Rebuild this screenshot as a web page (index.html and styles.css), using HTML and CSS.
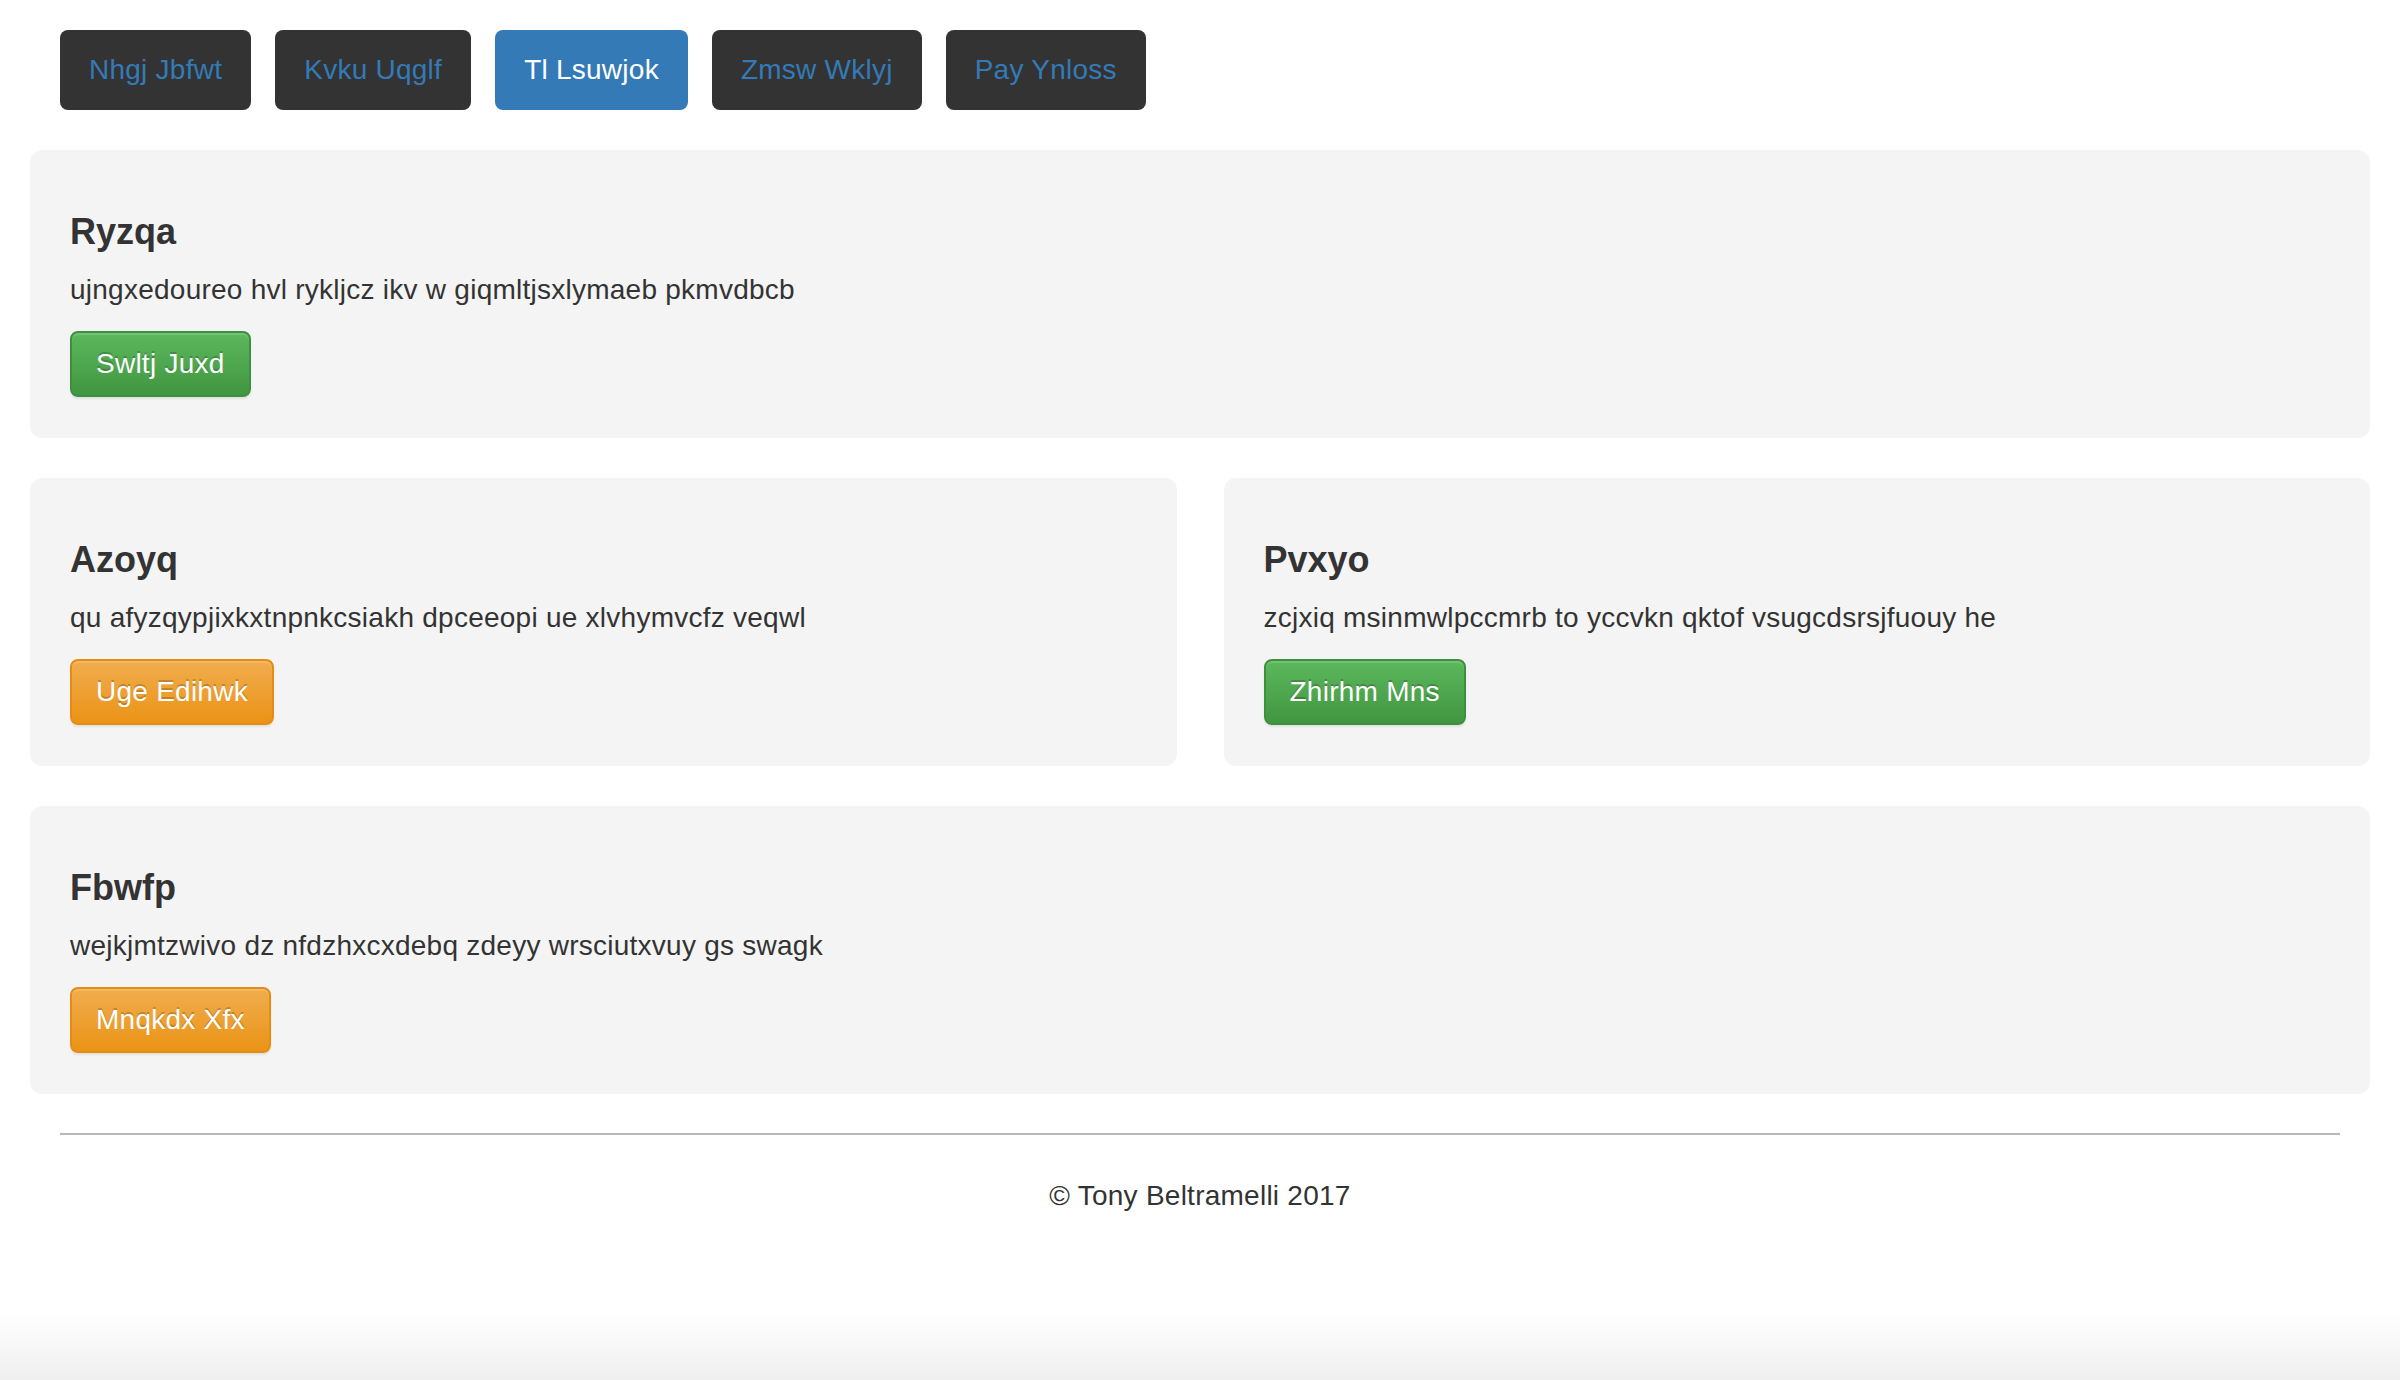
FILE: index.html
```html
<!DOCTYPE html>
<html>
<head>
<meta charset="utf-8">
<title>Page</title>
<link rel="stylesheet" href="styles.css">
</head>
<body>
<div class="page">
  <nav class="nav">
    <a class="nav-btn">Nhgj Jbfwt</a>
    <a class="nav-btn">Kvku Uqglf</a>
    <a class="nav-btn active">Tl Lsuwjok</a>
    <a class="nav-btn">Zmsw Wklyj</a>
    <a class="nav-btn">Pay Ynloss</a>
  </nav>
  <main class="content">
    <section class="card">
      <h4 class="card-title">Ryzqa</h4>
      <p class="card-text">ujngxedoureo hvl rykljcz ikv w giqmltjsxlymaeb pkmvdbcb</p>
      <a class="btn btn-success">Swltj Juxd</a>
    </section>
    <div class="row-2">
      <section class="card">
        <h4 class="card-title">Azoyq</h4>
        <p class="card-text">qu afyzqypjixkxtnpnkcsiakh dpceeopi ue xlvhymvcfz veqwl</p>
        <a class="btn btn-warning">Uge Edihwk</a>
      </section>
      <section class="card">
        <h4 class="card-title">Pvxyo</h4>
        <p class="card-text">zcjxiq msinmwlpccmrb to yccvkn qktof vsugcdsrsjfuouy he</p>
        <a class="btn btn-success">Zhirhm Mns</a>
      </section>
    </div>
    <section class="card">
      <h4 class="card-title">Fbwfp</h4>
      <p class="card-text">wejkjmtzwivo dz nfdzhxcxdebq zdeyy wrsciutxvuy gs swagk</p>
      <a class="btn btn-warning">Mnqkdx Xfx</a>
    </section>
  </main>
  <footer class="footer">
    <hr class="rule">
    <p class="copyright">© Tony Beltramelli 2017</p>
  </footer>
  <div class="bottom-shade"></div>
</div>
</body>
</html>
```

FILE: styles.css
```css
html, body {
  margin: 0;
  padding: 0;
  background: #ffffff;
}

body {
  font-family: "Liberation Sans", Arial, Helvetica, sans-serif;
  font-size: 28px;
  line-height: 40px;
  letter-spacing: 0.25px;
  color: #333333;
}

.page {
  min-height: 1380px;
  display: flex;
  flex-direction: column;
  padding: 0 30px;
  box-sizing: border-box;
}

.nav {
  display: flex;
  gap: 24px;
  padding: 30px 30px 0;
  height: 80px;
}

.nav-btn {
  display: flex;
  align-items: center;
  height: 80px;
  padding: 0 29px;
  background: #333333;
  color: #337ab7;
  border-radius: 8px;
  font-size: 28px;
  text-decoration: none;
  white-space: nowrap;
}

.nav-btn.active {
  background: #337ab7;
  color: #ffffff;
}

.content {
  display: flex;
  flex-direction: column;
  gap: 40px;
  margin-top: 40px;
}

.row-2 {
  display: grid;
  grid-template-columns: 1fr 1fr;
  gap: 47px;
}

.card {
  background: #f4f4f4;
  border-radius: 12px;
  padding: 62px 40px 41px;
  height: 288px;
  box-sizing: border-box;
}

.card-title {
  margin: 0 0 18px;
  font-size: 36px;
  line-height: 40px;
  font-weight: bold;
  letter-spacing: 0;
  color: #333333;
}

.card-text {
  margin: 0 0 21px;
  font-size: 28px;
  line-height: 40px;
  color: #333333;
}

.btn {
  display: inline-flex;
  align-items: center;
  height: 66px;
  box-sizing: border-box;
  padding: 0 24px;
  border: 2px solid transparent;
  border-radius: 8px;
  color: #ffffff;
  font-size: 28px;
  text-shadow: 0 -2px 0 rgba(0, 0, 0, 0.2);
  box-shadow: inset 0 2px 0 rgba(255, 255, 255, 0.15), 0 2px 2px rgba(0, 0, 0, 0.075);
  white-space: nowrap;
}

.btn-success {
  background: linear-gradient(to bottom, #5cb85c 0%, #419641 100%);
  border-color: #3e8f3e;
}

.btn-warning {
  background: linear-gradient(to bottom, #f0ad4e 0%, #eb9316 100%);
  border-color: #e38d13;
}

.footer {
  padding: 0 30px;
}

.rule {
  margin: 39px 0 0;
  border: 0;
  border-top: 2px solid #b8b8b8;
  height: 0;
}

.copyright {
  margin: 41px 0 0;
  text-align: center;
  font-size: 28px;
  line-height: 40px;
  color: #333333;
}

.bottom-shade {
  margin: auto -30px 0;
  height: 67px;
  background: linear-gradient(to bottom, #ffffff 0%, #efefef 100%);
}
```
